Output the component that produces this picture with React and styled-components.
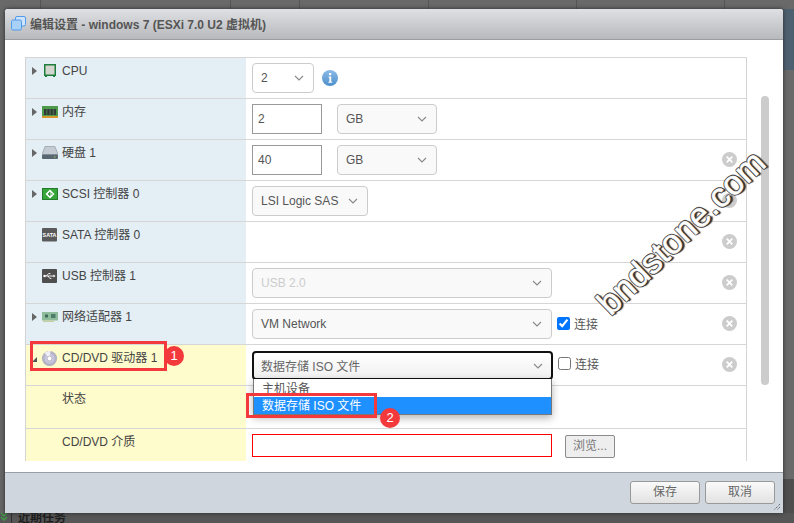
import React from "react";
import styled, { createGlobalStyle } from "styled-components";

const FONT = `"Liberation Sans", "Noto Sans CJK SC", sans-serif`;

const GlobalStyle = createGlobalStyle`
  html, body { margin: 0; padding: 0; background: #666; }
  body { font-family: ${FONT}; font-size: 12px; }
`;

const Page = styled.div`
  position: relative;
  width: 794px;
  height: 523px;
  overflow: hidden;
  display: flex;
  flex-direction: column;
  background: #666;
`;

const TopStrip = styled.div`
  height: 9px;
  display: grid;
  grid-template-columns: 41px 190px 69px 129px 148px 148px 1fr;
  background: #696969;
`;

const StripCell = styled.div`
  border-right: 1px solid #555;
`;

const Middle = styled.div`
  display: flex;
  height: 504px;
`;

const Gutter = styled.div`
  width: 5px;
  background: #676767;
`;

const SideGutter = styled.div`
  flex: 1;
  background: linear-gradient(#4d6070 0, #4d6070 61px, #6a6a6a 61px, #6a6a6a 470px, #4e4e4e 470px);
`;

const BottomBar = styled.div`
  height: 10px;
  display: flex;
  background: #565656;
  color: #1d1d1d;
  font-size: 12px;
  font-weight: 700;
  line-height: 11px;
  overflow: hidden;
`;

const TaskIconSlot = styled.span`
  width: 11px;
  height: 10px;
  margin-right: 6px;
  border-right: 1px solid #2e2e2e;
`;

const Dialog = styled.div`
  position: relative;
  width: 778px;
  display: flex;
  flex-direction: column;
  border-radius: 3px 3px 0 0;
  background: #fff;
  box-shadow: 0 0 4px #2b2b2b;
`;

const Header = styled.div`
  height: 31px;
  box-sizing: border-box;
  display: flex;
  align-items: center;
  gap: 4px;
  padding: 0 0 1px 6px;
  background: linear-gradient(#dfe0e3, #b8b9bc);
  border-bottom: 1px solid #9c9ea2;
  border-radius: 3px 3px 0 0;
  color: #555;
  font-size: 12px;
  font-weight: 700;
`;

const Body = styled.div`
  height: 432px;
  box-sizing: border-box;
  padding: 17px 14px 11px 20px;
  display: flex;
  gap: 14px;
  background: #fff;
`;

const Table = styled.div`
  width: 722px;
  box-sizing: border-box;
  height: 404px;
  overflow: hidden;
  border-left: 1px solid #d4d4d4;
  border-right: 1px solid #d4d4d4;
`;

const Row = styled.div`
  display: grid;
  grid-template-columns: 220px 1fr;
  height: ${(p) => p.$height || 41}px;
  box-sizing: border-box;
  border-top: 1px solid #d6d6d6;
`;

const LabelCell = styled.div`
  display: flex;
  align-items: flex-start;
  padding: 6px 0 0 ${(p) => (p.$indent ? 36 : 6)}px;
  background: ${(p) => (p.$active ? "#fefbcc" : "#e3eef5")};
  color: #444;
  line-height: 15px;
`;

const Arrow = styled.span`
  width: 0;
  height: 0;
  margin-top: 3px;
  border-style: solid;
  border-width: 4px 0 4px 5px;
  border-color: transparent transparent transparent #666;
  visibility: ${(p) => (p.$hidden ? "hidden" : "visible")};
`;

const ArrowOpen = styled.span`
  width: 0;
  height: 0;
  margin: 6px 0 0 0;
  border-style: solid;
  border-width: 0 0 5px 5px;
  border-color: transparent transparent #555 transparent;
`;

const IconSlot = styled.span`
  width: 16px;
  height: 16px;
  margin: 0 4px 0 5px;
  flex-shrink: 0;
`;

const ValueCell = styled.div`
  display: flex;
  align-items: flex-start;
  padding: 5px 9px 0 6px;
`;

const Select = styled.div`
  position: relative;
  width: ${(p) => p.$width}px;
  height: 30px;
  box-sizing: border-box;
  display: flex;
  align-items: center;
  justify-content: space-between;
  padding: 0 9px 0 8px;
  margin-left: ${(p) => p.$offset || 0}px;
  border: 1px solid #ccc;
  border-radius: 4px;
  background: ${(p) => (p.$plain ? "#fff" : "#f9f9f9")};
  color: ${(p) => (p.$disabled ? "#ccc" : "#555")};
`;

const OpenSelect = styled(Select)`
  height: 29px;
  margin-top: 1px;
  border: 2px solid #111;
  padding: 0 8px 0 7px;
  background: linear-gradient(#fff, #f0f0f0);
  color: #666;
`;

const Dropdown = styled.div`
  position: absolute;
  left: -1px;
  right: -1px;
  top: calc(100% + 1px);
  border: 1px solid #777;
  border-top: none;
  background: #fff;
  box-shadow: 0 3px 8px rgba(0, 0, 0, 0.3);
  z-index: 2;
`;

const Option = styled.div`
  height: ${(p) => (p.$selected ? 17 : 18)}px;
  line-height: ${(p) => (p.$selected ? 19 : 20)}px;
  overflow: hidden;
  padding-left: 8px;
  background: ${(p) => (p.$selected ? "#1e90ff" : "#fff")};
  color: ${(p) => (p.$selected ? "#fff" : "#555")};
`;

const TextInput = styled.div`
  width: 70px;
  height: 30px;
  box-sizing: border-box;
  padding-left: 5px;
  border: 1px solid #999;
  color: #555;
  line-height: 28px;
`;

const ErrorInput = styled.div`
  width: 300px;
  height: 23px;
  box-sizing: border-box;
  border: 1px solid #f00;
  background: #fff;
`;

const BrowseButton = styled.div`
  width: 50px;
  height: 23px;
  margin: 1px 0 0 13px;
  box-sizing: border-box;
  border: 1px solid #8b8b8b;
  border-radius: 2px;
  background: #eee;
  color: #777;
  text-align: center;
  line-height: 21px;
`;

const Connect = styled.label`
  display: flex;
  align-items: center;
  gap: 4px;
  height: 30px;
  margin: ${(p) => p.$lift || -1}px 0 0 5px;
  color: #555;
`;

const CheckBox = styled.input`
  margin: 0;
  width: 13px;
  height: 13px;
`;

const RemoveSlot = styled.span`
  margin-left: auto;
  width: 15px;
  height: 29px;
  display: flex;
  align-items: center;
`;

const InfoSlot = styled.span`
  width: 16px;
  height: 30px;
  margin-left: 8px;
  display: flex;
  align-items: center;
`;

const Scrollbar = styled.div`
  width: 8px;
  height: 289px;
  margin-top: 39px;
  border-radius: 4px;
  background: #ccc;
`;

const Footer = styled.div`
  position: relative;
  height: 41px;
  box-sizing: border-box;
  display: flex;
  justify-content: flex-end;
  gap: 5px;
  padding: 8px 8px 0 0;
  background: #d0d6de;
  border-top: 1px solid #9a9ea3;
`;

const FooterButton = styled.div`
  width: 70px;
  height: 23px;
  box-sizing: border-box;
  border: 1px solid #999;
  border-radius: 3px;
  background: linear-gradient(#fafafa, #e2e2e2);
  color: #666;
  font-size: 12px;
  text-align: center;
  line-height: 21px;
`;

const Grip = styled.svg`
  position: absolute;
  right: 2px;
  bottom: 2px;
`;

const RedBox = styled.div`
  position: absolute;
  left: ${(p) => p.$x}px;
  top: ${(p) => p.$y}px;
  width: ${(p) => p.$w}px;
  height: ${(p) => p.$h}px;
  box-sizing: border-box;
  border: 3px solid #f4393c;
  z-index: 3;
`;

const Badge = styled.div`
  position: absolute;
  left: ${(p) => p.$x}px;
  top: ${(p) => p.$y}px;
  width: 20px;
  height: 20px;
  border-radius: 50%;
  background: #f4393c;
  color: #fff;
  font-size: 13px;
  text-align: center;
  line-height: 20px;
  z-index: 3;
`;

const Watermark = styled.div`
  position: absolute;
  left: 556px;
  top: 212px;
  width: 250px;
  text-align: center;
  transform: rotate(-44deg);
  color: #fff;
  font-size: 34px;
  line-height: 40px;
  letter-spacing: 0.4px;
  white-space: nowrap;
  z-index: 4;
  -webkit-text-stroke: 0.5px #fff;
  text-shadow: -1px 0 0 #444, 1px 0 0 #333, 0 -1px 0 #444, 0 1px 0 #333,
    1px 1px 0 #333, -1px -1px 0 #888, 1px -1px 0 #666, -1px 1px 0 #666,
    2px 2px 1px #333;
`;

const Chevron = () => (
  <svg width="10" height="6" viewBox="0 0 10 6">
    <path d="M1 1l4 4 4-4" fill="none" stroke="#888" strokeWidth="1.1" />
  </svg>
);

const RemoveIcon = () => (
  <svg width="15" height="15" viewBox="0 0 15 15">
    <circle cx="7.5" cy="7.5" r="7.5" fill="#ccc" />
    <path d="M4.7 4.7l5.6 5.6M10.3 4.7l-5.6 5.6" stroke="#fff" strokeWidth="1.8" />
  </svg>
);

const InfoIcon = () => (
  <svg width="16" height="16" viewBox="0 0 16 16">
    <defs>
      <linearGradient id="infoFill" x1="0" y1="0" x2="0" y2="1">
        <stop offset="0" stopColor="#8dbbe6" />
        <stop offset="1" stopColor="#4d8fcb" />
      </linearGradient>
    </defs>
    <circle cx="8" cy="8" r="8" fill="url(#infoFill)" />
    <rect x="7" y="3" width="2.2" height="2.2" fill="#fff" />
    <path d="M6.6 6.6h2.6v5.2h1v1H6.4v-1h1V7.6h-.8z" fill="#fff" />
  </svg>
);

const VmIcon = () => (
  <svg width="15" height="15" viewBox="0 0 15 15">
    <rect x="4.5" y="0.5" width="10" height="9.5" rx="1.5" fill="#cfe4fb" stroke="#4f9be8" />
    <rect x="0.5" y="4" width="10" height="10" rx="1.5" fill="#a9d0f7" stroke="#4f9be8" />
  </svg>
);

const CpuIcon = () => (
  <svg width="16" height="16" viewBox="0 0 16 16">
    <rect x="2" y="0" width="12" height="12" fill="#1e7d3a" />
    <rect x="3.5" y="1.5" width="9" height="9" fill="#d5d5cf" />
    <path d="M3 12h2v1H3zM11 12h2v1h-2z" fill="#1e7d3a" />
  </svg>
);

const RamIcon = () => (
  <svg width="16" height="16" viewBox="0 0 16 16">
    <rect x="0" y="1" width="16" height="10" fill="#4d9b4a" />
    <path d="M2 4h2.5v6H2zM5.2 4h2.5v6H5.2zM8.4 4h2.5v6H8.4zM11.6 4h2.5v6h-2.5z" fill="#33373a" />
    <rect x="0" y="11" width="16" height="2" fill="#d6972f" />
  </svg>
);

const DiskIcon = () => (
  <svg width="16" height="16" viewBox="0 0 16 16">
    <path d="M3 0.5h10l3 8H0z" fill="#c4cbd2" stroke="#8a9299" strokeWidth="0.6" />
    <rect x="0" y="8.5" width="16" height="4.5" rx="1" fill="#59656f" />
    <rect x="12" y="10.5" width="1.5" height="1" fill="#9fd06a" />
  </svg>
);

const ScsiIcon = () => (
  <svg width="16" height="16" viewBox="0 0 16 16">
    <rect x="0.5" y="1.5" width="15" height="11" fill="#37a63a" stroke="#237a2a" />
    <path d="M8 2.5l4.5 4.5L8 11.5 3.5 7z" fill="#fff" />
    <path d="M10.5 7H6.5M8.3 5.2L6.5 7l1.8 1.8" fill="none" stroke="#2a8f33" strokeWidth="1.1" />
  </svg>
);

const SataIcon = () => (
  <svg width="16" height="16" viewBox="0 0 16 16">
    <rect x="0" y="0" width="15" height="13.5" rx="1" fill="#5a5a5a" />
    <text x="7.5" y="9" textAnchor="middle" fill="#fff" fontFamily="Liberation Sans" fontWeight="700" fontSize="5.4">SATA</text>
  </svg>
);

const UsbIcon = () => (
  <svg width="16" height="16" viewBox="0 0 16 16">
    <rect x="0" y="0" width="15" height="14" rx="1" fill="#4e4e4e" />
    <path d="M2 7h10M4.5 7l2-2.4h2M6 7l1.8 2.4h1.6" fill="none" stroke="#fff" strokeWidth="0.9" />
    <path d="M11.5 5.6L13.5 7l-2 1.4z" fill="#fff" />
    <circle cx="2.5" cy="7" r="1.2" fill="#fff" />
  </svg>
);

const NicIcon = () => (
  <svg width="16" height="16" viewBox="0 0 16 16">
    <rect x="0" y="2" width="16" height="8.5" fill="#8fbd9c" />
    <rect x="3" y="4.5" width="3" height="3" fill="#3f6f5a" />
    <rect x="9" y="4" width="4.5" height="4" fill="#4d7d68" />
    <rect x="1" y="10.5" width="11" height="1.5" fill="#c6cfa0" />
  </svg>
);

const DiscIcon = () => (
  <svg width="16" height="16" viewBox="0 0 16 16">
    <defs>
      <radialGradient id="discFill" cx="0.5" cy="0.5" r="0.5">
        <stop offset="0" stopColor="#e6e6ee" />
        <stop offset="0.6" stopColor="#c3c0dc" />
        <stop offset="1" stopColor="#a9a9b5" />
      </radialGradient>
    </defs>
    <circle cx="7.5" cy="7.5" r="7.5" fill="url(#discFill)" />
    <path d="M7.5 7.5L2.5 2A7.5 7.5 0 0 1 8.5 0z" fill="#eeeef4" />
    <circle cx="7.5" cy="7.5" r="2.4" fill="#fff" stroke="#9a9aa8" strokeWidth="0.6" />
  </svg>
);

const TaskIcon = () => (
  <svg width="8" height="10" viewBox="0 0 8 10">
    <path d="M1 0l3 3 3-3M1 4l3 3 3-3" fill="none" stroke="#3fa04a" strokeWidth="1.4" />
  </svg>
);

const GripIcon = () => (
  <Grip width="9" height="9" viewBox="0 0 9 9">
    <path d="M8 2L2 8M8 5L5 8" stroke="#555" strokeWidth="1" strokeDasharray="1.2 1" />
  </Grip>
);

const stripCells = [0, 1, 2, 3, 4, 5];

const Device = ({ icon, children, expandable = true }) => (
  <LabelCell>
    <Arrow $hidden={!expandable} />
    <IconSlot>{icon}</IconSlot>
    {children}
  </LabelCell>
);

const Remove = () => (
  <RemoveSlot>
    <RemoveIcon />
  </RemoveSlot>
);

export default function App() {
  return (
    <Page>
      <GlobalStyle />
      <TopStrip>
        {stripCells.map((c) => (
          <StripCell key={c} />
        ))}
      </TopStrip>
      <Middle>
        <Gutter />
        <Dialog>
          <Header>
            <VmIcon />
            编辑设置 - windows 7 (ESXi 7.0 U2 虚拟机)
          </Header>
          <Body>
            <Table>
              <Row>
                <Device icon={<CpuIcon />}>CPU</Device>
                <ValueCell>
                  <Select $width={62} $plain>
                    2
                    <Chevron />
                  </Select>
                  <InfoSlot>
                    <InfoIcon />
                  </InfoSlot>
                </ValueCell>
              </Row>
              <Row>
                <Device icon={<RamIcon />}>内存</Device>
                <ValueCell>
                  <TextInput>2</TextInput>
                  <Select $width={100} $offset={15}>
                    GB
                    <Chevron />
                  </Select>
                </ValueCell>
              </Row>
              <Row>
                <Device icon={<DiskIcon />}>硬盘 1</Device>
                <ValueCell>
                  <TextInput>40</TextInput>
                  <Select $width={100} $offset={15}>
                    GB
                    <Chevron />
                  </Select>
                  <Remove />
                </ValueCell>
              </Row>
              <Row>
                <Device icon={<ScsiIcon />}>SCSI 控制器 0</Device>
                <ValueCell>
                  <Select $width={116}>
                    LSI Logic SAS
                    <Chevron />
                  </Select>
                  <Remove />
                </ValueCell>
              </Row>
              <Row>
                <Device icon={<SataIcon />} expandable={false}>SATA 控制器 0</Device>
                <ValueCell>
                  <Remove />
                </ValueCell>
              </Row>
              <Row>
                <Device icon={<UsbIcon />} expandable={false}>USB 控制器 1</Device>
                <ValueCell>
                  <Select $width={300} $disabled>
                    USB 2.0
                    <Chevron />
                  </Select>
                  <Remove />
                </ValueCell>
              </Row>
              <Row>
                <Device icon={<NicIcon />}>网络适配器 1</Device>
                <ValueCell>
                  <Select $width={300}>
                    VM Network
                    <Chevron />
                  </Select>
                  <Connect>
                    <CheckBox type="checkbox" defaultChecked />
                    连接
                  </Connect>
                  <Remove />
                </ValueCell>
              </Row>
              <Row>
                <LabelCell $active>
                  <ArrowOpen />
                  <IconSlot>
                    <DiscIcon />
                  </IconSlot>
                  CD/DVD 驱动器 1
                </LabelCell>
                <ValueCell>
                  <OpenSelect $width={301}>
                    数据存储 ISO 文件
                    <Chevron />
                    <Dropdown>
                      <Option>主机设备</Option>
                      <Option $selected>数据存储 ISO 文件</Option>
                    </Dropdown>
                  </OpenSelect>
                  <Connect $lift={-2}>
                    <CheckBox type="checkbox" />
                    连接
                  </Connect>
                  <Remove />
                </ValueCell>
              </Row>
              <Row $height={43}>
                <LabelCell $active $indent>状态</LabelCell>
                <ValueCell />
              </Row>
              <Row $height={43}>
                <LabelCell $active $indent>CD/DVD 介质</LabelCell>
                <ValueCell>
                  <ErrorInput />
                  <BrowseButton>浏览...</BrowseButton>
                </ValueCell>
              </Row>
            </Table>
            <Scrollbar />
          </Body>
          <Footer>
            <FooterButton>保存</FooterButton>
            <FooterButton>取消</FooterButton>
            <GripIcon />
          </Footer>
          <RedBox $x={25} $y={332} $w={137} $h={30} />
          <Badge $x={159} $y={337}>1</Badge>
          <RedBox $x={241} $y={384} $w={131} $h={25} />
          <Badge $x={375} $y={399}>2</Badge>
        </Dialog>
        <SideGutter />
      </Middle>
      <BottomBar>
        <TaskIconSlot>
          <TaskIcon />
        </TaskIconSlot>
        近期任务
      </BottomBar>
      <Watermark>bndstone.com</Watermark>
    </Page>
  );
}
